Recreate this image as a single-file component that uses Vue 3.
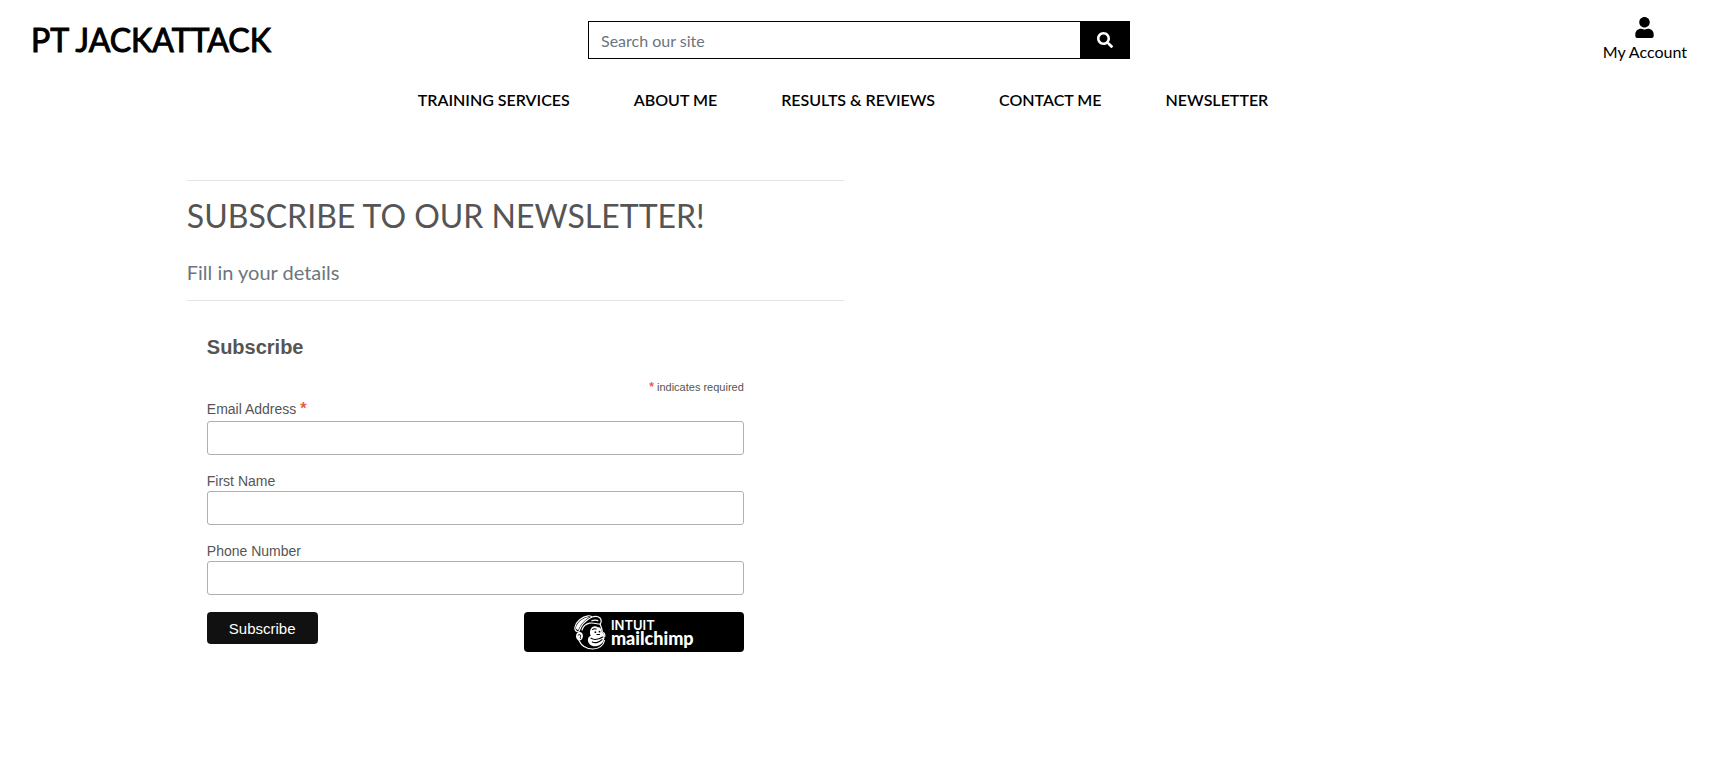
<script setup>
import { ref, reactive } from 'vue'

const query = ref('')
const navItems = ['Training Services', 'About Me', 'Results & Reviews', 'Contact Me', 'Newsletter']
const form = reactive({ email: '', firstName: '', phone: '' })
const fields = [
  { key: 'email', label: 'Email Address', type: 'email', required: true },
  { key: 'firstName', label: 'First Name', type: 'text', required: false },
  { key: 'phone', label: 'Phone Number', type: 'text', required: false },
]
</script>

<template>
  <div class="page">
    <header class="header">
      <div class="topbar">
        <a class="brand" href="#">PT JACKATTACK</a>
        <form class="search" role="search" @submit.prevent>
          <input v-model="query" class="search-input" type="text" placeholder="Search our site" aria-label="Search our site" />
          <button class="search-button" type="submit" aria-label="Search">
            <svg viewBox="0 0 512 512" width="16" height="16" aria-hidden="true">
              <path fill="currentColor" d="M505 442.700L405.300 343c-4.500-4.500-10.600-7-17-7H372c27.600-35.300 44-79.700 44-128C416 93.100 322.900 0 208 0S0 93.100 0 208s93.100 208 208 208c48.300 0 92.700-16.400 128-44v16.300c0 6.400 2.500 12.500 7 17l99.700 99.700c9.400 9.400 24.600 9.400 33.900 0l28.300-28.300c9.400-9.400 9.400-24.600.1-34zM208 336c-70.700 0-128-57.200-128-128 0-70.700 57.200-128 128-128 70.700 0 128 57.200 128 128 0 70.700-57.200 128-128 128z" />
            </svg>
          </button>
        </form>
        <a class="account" href="#">
          <svg viewBox="0 0 448 512" width="19" height="21" aria-hidden="true">
            <path fill="currentColor" d="M224 256c70.700 0 128-57.300 128-128S294.700 0 224 0 96 57.300 96 128s57.300 128 128 128zm89.600 32h-16.700c-22.200 10.200-46.900 16-72.900 16s-50.600-5.800-72.900-16h-16.700C60.200 288 0 348.200 0 422.400V464c0 26.500 21.500 48 48 48h352c26.500 0 48-21.500 48-48v-41.600c0-74.200-60.200-134.400-134.400-134.400z" />
          </svg>
          <span>My Account</span>
        </a>
      </div>
      <nav class="nav" aria-label="Main">
        <a v-for="item in navItems" :key="item" class="nav-link" href="#">{{ item }}</a>
      </nav>
    </header>

    <main class="main">
      <section class="column">
        <div class="intro">
          <h1 class="title">Subscribe to our newsletter!</h1>
          <p class="subtitle">Fill in your details</p>
        </div>

        <form class="signup" @submit.prevent>
          <h2 class="signup-title">Subscribe</h2>
          <p class="required-note"><span class="asterisk">*</span> indicates required</p>
          <div v-for="field in fields" :key="field.key" class="field">
            <label class="field-label" :class="{ 'is-required': field.required }" :for="field.key">
              {{ field.label }} <span v-if="field.required" class="asterisk">*</span>
            </label>
            <input :id="field.key" v-model="form[field.key]" class="field-input" :type="field.type" />
          </div>
          <div class="actions">
            <button class="subscribe" type="submit">Subscribe</button>
            <a class="badge" href="#" aria-label="Intuit Mailchimp">
              <svg class="chimp" viewBox="0 0 32 35" width="32" height="35" aria-hidden="true">
                <g fill="none" stroke="#fff" stroke-width="1.200" stroke-linecap="round" stroke-linejoin="round">
                  <path d="M4.500 17C2 16.500 .6 14.500 1 12 2 7 8 1.500 14 .8c2-.2 3.200.5 4 1.200 3-.8 6.500-.4 8 1 1.500 1.500 1.400 4 .2 6.300" />
                  <path d="M17.500 2.200C12 5 7 10 4.800 16.500" />
                  <path d="M8 15c.8-3 3.700-5.800 7.500-6.800 3.500-.9 7 .8 10.500.8" />
                  <path d="M17.800 5.800c2-.9 4.200-1 6-.2" />
                  <path d="M5 25.500C7.500 31 13 34 19 34c6 0 10.500-3.500 11.500-8.500" />
                  <path d="M26.200 9.500c1 2 1.800 4.500 2.200 7.500 2 .8 2.800 2.500 2.400 4.500" />
                </g>
                <path fill="#fff" d="M2 12C3.500 7 9.500 2 15.500 1.900 10.500 5 6.500 9 4.200 15 2.500 14.800 1.500 13.500 2 12z" />
                <path fill="#fff" d="M5 17.100c2-.5 3.700.9 3.900 3.200.2 2.600-1 5.100-3.400 5.100-2 0-3.400-1.800-3.500-4-.1-2.200 1.200-3.900 3-4.300z" />
                <path fill="none" stroke="#000" stroke-width="1" stroke-linecap="round" d="M4 20.300c1-1.300 2.800-.8 2.700.6-.1 1-.9 1.300-.3 2.500" />
                <path fill="#fff" d="M17 13.500c1.500-2.500 4.700-2.800 6.800-1.200 2.600-.3 4 1.800 4 5 1.900 1.200 3 3.200 2.700 5.500-.6 4.900-4.700 8.700-9.400 8.500-4.200-.2-7-2.900-7.200-6.100-.1-2 1-3.700 2.800-4.400-1.200-2.300-.9-5.300.3-7.300z" />
                <path fill="none" stroke="#000" stroke-width="1.100" stroke-linecap="round" d="M18.600 14.500c1-.9 2.300-1 3.500-.4M17 23.300c3 1.800 8 1.200 11.800-1.300M18.300 26.900c3 1.600 7.200.4 9.700-2.200M23 19.500h2.500" />
                <circle cx="21.400" cy="17.200" r=".9" />
                <circle cx="25.500" cy="16.700" r=".9" />
              </svg>
              <span class="badge-text">
                <span class="badge-top">INTUIT</span>
                <span class="badge-bottom">mailchimp</span>
              </span>
            </a>
          </div>
        </form>
      </section>
    </main>
  </div>
</template>

<style>
body {
  margin: 0;
  background: #fff;
}
</style>

<style scoped>
.page,
.page * {
  box-sizing: border-box;
}
.page {
  font-family: Lato, sans-serif;
  font-size: 16px;
  line-height: 24px;
  color: #555;
}
a {
  color: #000;
  text-decoration: none;
}
.topbar {
  display: grid;
  grid-template-columns: 1fr 542px 1fr;
  align-items: center;
  height: 80px;
  padding: 0 31px;
}
.brand {
  font-size: 32px;
  line-height: 40px;
  -webkit-text-stroke: 1px #000;
}
.search {
  display: flex;
  height: 38px;
}
.search-input {
  flex: 1;
  min-width: 0;
  padding: 2px 12px 0;
  border: 1px solid #000;
  border-right: 0;
  border-radius: 0;
  font: inherit;
  color: #495057;
  background: #fff;
}
.search-input::placeholder {
  color: #6c757d;
  opacity: 1;
}
.search-button {
  display: flex;
  align-items: center;
  justify-content: center;
  width: 50px;
  padding: 0;
  border: 0;
  background: #000;
  color: #fff;
}
.account {
  justify-self: end;
  display: flex;
  flex-direction: column;
  align-items: center;
  gap: 2px;
  padding-top: 1px;
}
.nav {
  display: flex;
  justify-content: center;
  gap: 64px;
  height: 40px;
  padding-right: 32px;
  align-items: center;
}
.nav-link {
  text-transform: uppercase;
  font-weight: 600;
}
.main {
  width: 80%;
  margin: 0 auto;
  padding-top: 60px;
}
.column {
  width: 50%;
  padding: 0 15px;
}
.intro {
  border-top: 1px solid #e5e5e5;
  border-bottom: 1px solid #e5e5e5;
  padding: 15px 0 16px;
}
.title {
  margin: 0 0 24px;
  font-size: 32px;
  line-height: 40px;
  font-weight: 400;
  text-transform: uppercase;
}
.subtitle {
  margin: 0;
  font-size: 20px;
  line-height: 24px;
  color: #6c757d;
}
.signup {
  max-width: 577px;
  padding: 30px 20px 0;
  font-family: "Liberation Sans", Arial, sans-serif;
  font-size: 14px;
}
.signup-title {
  margin: 0;
  font-size: 20px;
  line-height: 32px;
  font-weight: 700;
}
.required-note {
  margin: 16px 0 2px;
  font-size: 11px;
  line-height: 16px;
  text-align: right;
}
.asterisk {
  color: #e85c41;
  font-size: 12px;
  font-weight: 700;
}
.field {
  margin-bottom: 16px;
}
.field-label {
  display: block;
  line-height: 20px;
}
.field-label.is-required {
  line-height: 24px;
}
.field-label .asterisk {
  font-size: 16px;
}
.field-input {
  display: block;
  width: 100%;
  height: 34px;
  padding: 0 8px;
  border: 1px solid #abb0b2;
  border-radius: 3px;
  background: #fff;
  font: inherit;
}
.actions {
  display: flex;
  justify-content: space-between;
  align-items: flex-start;
  padding-top: 1px;
}
.subscribe {
  height: 32px;
  padding: 0 22px;
  border: 0;
  border-radius: 4px;
  background: #111;
  color: #fff;
  font-family: inherit;
  font-size: 15px;
}
.badge {
  display: flex;
  align-items: center;
  justify-content: center;
  gap: 5px;
  width: 220px;
  height: 40px;
  border-radius: 4px;
  background: #000;
  color: #fff;
}
.badge-text {
  display: flex;
  flex-direction: column;
}
.badge-top {
  font: 600 13px/12px Inter, sans-serif;
}
.badge-bottom {
  font: 900 18px/14px Lato, sans-serif;
}
</style>
